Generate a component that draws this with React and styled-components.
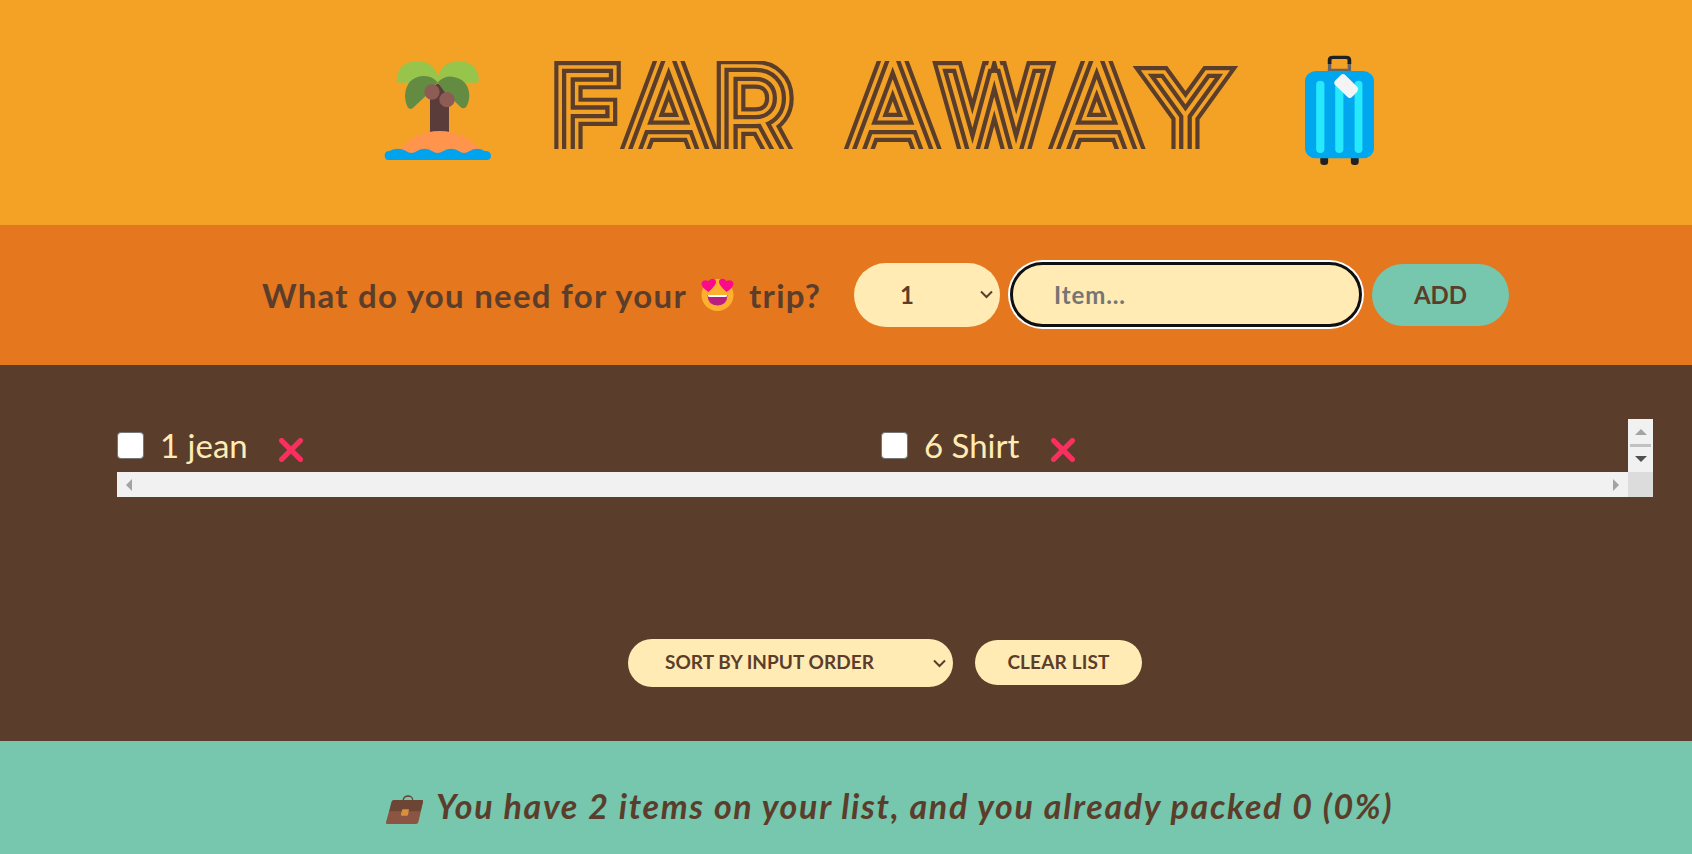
import React from "react";
import styled, { createGlobalStyle } from "styled-components";

const c = {
  sun: "#f4a226",
  orange: "#e5771f",
  brown: "#5a3e2b",
  bark: "#5a3e2b",
  cream: "#ffebb3",
  mint: "#76c7ad",
};

const GlobalStyle = createGlobalStyle`
  * { box-sizing: border-box; margin: 0; padding: 0; }
  body { font-family: Lato, "Open Sans", sans-serif; color: ${c.brown}; background: ${c.bark}; overflow: hidden; }
`;

const Page = styled.div`
  height: 854px;
  display: grid;
  grid-template-rows: 225px 140px 376px 113px;
`;

const Header = styled.header`
  background: ${c.sun};
  display: flex;
  align-items: flex-start;
  padding: 55px 0 0 384px;
`;
const PalmIcon = styled.svg`width: 107.3px; height: 101.3px; margin-top: 5px;`;
const Wordmark = styled.svg`width: 700px; height: 88px; margin: 6px 65px 0 48.7px;`;
const CaseIcon = styled.svg`width: 69px; height: 110px;`;

const Form = styled.form`
  background: ${c.orange};
  display: flex;
  align-items: center;
  padding: 0 0 1px 262px;
`;
const Prompt = styled.h3`
  width: 592px;
  display: flex;
  align-items: center;
  font-size: 33px;
  line-height: 40px;
  white-space: nowrap;
`;
const Words = styled.span`
  display: inline-block;
  white-space: nowrap;
  width: ${(p) => p.$w}px;
  letter-spacing: ${(p) => p.$track || 0}px;
`;
const FaceIcon = styled.svg`width: 33px; height: 33px; margin: 0 15px 0 15px;`;

const Picker = styled.div`
  display: flex;
  align-items: center;
  justify-content: space-between;
  width: ${(p) => p.$w}px;
  height: ${(p) => p.$h}px;
  border-radius: 100px;
  background: ${c.cream};
  padding: ${(p) => p.$pad};
  font-size: ${(p) => p.$size}px;
  font-weight: 700;
  letter-spacing: ${(p) => p.$track || 0}px;
  white-space: nowrap;
`;
const Chevron = styled.svg`width: 13px; height: 9px; flex: none;`;

const ItemInput = styled.input`
  width: 352px;
  height: 65px;
  margin-left: 10px;
  border: 3px solid #101010;
  border-radius: 100px;
  box-shadow: 0 0 0 2px #fff;
  outline: none;
  background: ${c.cream};
  padding: 0 41px 1px;
  font: 700 24px Lato, sans-serif;
  letter-spacing: 0.9px;
  &::placeholder { color: #757575; }
`;
const PillButton = styled.button`
  width: ${(p) => p.$w}px;
  height: ${(p) => p.$h}px;
  margin-left: ${(p) => p.$gap}px;
  margin-bottom: ${(p) => p.$lift || 0}px;
  padding-bottom: ${(p) => p.$drop ?? 2}px;
  border: 0;
  border-radius: 100px;
  background: ${(p) => p.$bg};
  color: ${c.brown};
  font: 700 ${(p) => p.$size}px Lato, sans-serif;
  letter-spacing: ${(p) => p.$track || 0}px;
  white-space: nowrap;
`;

const ListSection = styled.section`
  background: ${c.bark};
  padding: 54px 39px 0 117px;
`;
const ScrollBox = styled.div`
  display: grid;
  grid-template-columns: 1511px 25px;
  grid-template-rows: 53px 25px;
`;
const Items = styled.ul`
  display: grid;
  grid-template-columns: 764px 1fr;
  list-style: none;
`;
const Item = styled.li`
  display: flex;
  align-items: flex-start;
  padding-top: 13px;
  color: ${c.cream};
  font-size: 33px;
  line-height: 27px;
`;
const Check = styled.input`
  appearance: none;
  width: 27px;
  height: 27px;
  border: 1.5px solid #767676;
  border-radius: 4px;
  background: #fff;
  margin-right: 16px;
`;
const CrossIcon = styled.svg`width: 24px; height: 24px; margin: 6px 0 0 ${(p) => p.$gap}px;`;

const VBar = styled.div`
  background: #f1f1f1;
  display: flex;
  flex-direction: column;
  align-items: center;
  padding: 10px 0;
`;
const Thumb = styled.div`width: 21px; height: 3px; background: #c1c1c1; margin: 9px 0;`;
const HBar = styled.div`
  background: #f1f1f1;
  display: flex;
  align-items: center;
  justify-content: space-between;
  padding: 0 9px;
`;
const Corner = styled.div`background: #dcdcdc;`;
const Arrow = styled.svg`display: block; width: ${(p) => p.$w}px; height: ${(p) => p.$h}px; flex: none;`;

const Actions = styled.div`
  display: flex;
  align-items: center;
  padding-left: 511px;
  margin-top: 142px;
`;

const Footer = styled.footer`
  background: ${c.mint};
  display: flex;
  align-items: flex-start;
  padding: 45px 0 0 386px;
  font-size: 34px;
  font-weight: 700;
  font-style: italic;
  line-height: 40px;
`;
const BriefcaseIcon = styled.svg`width: 37px; height: 29px; margin: 9px 13px 0 0;`;

const Palm = () => (
  <PalmIcon viewBox="42 60 322 304">
    <path d="M80 121Q84 64 142 64Q195 66 204 112Q214 66 267 64Q324 67 327 121Q326 128 318 128H88Q80 128 80 121Z" fill="#97c54c" />
    <path d="M180 276V150L203 130L237 158V276Z" fill="#5a3c3a" />
    <path d="M203 127Q184 106 160 108Q108 112 105 168Q105 187 113 202Q122 212 131 202L171 164Z" fill="#638b42" />
    <path d="M203 127Q222 108 246 110Q295 116 298 165Q298 185 289 200Q280 209 271 200L222 154Z" fill="#638b42" />
    <circle cx="186" cy="156" r="23" fill="#8c5c55" />
    <circle cx="231" cy="179" r="23" fill="#8c5c55" />
    <path d="M86 332Q135 273 209 273Q282 273 334 332L300 345H120Z" fill="#ff944d" />
    <path d="M44 345Q45 333 58 333Q84 320 108 333Q124 345 141 333Q164 320 186 333Q202 345 220 333Q244 320 266 333Q282 345 299 333Q322 320 344 333Q363 332 363 347Q363 360 350 360H56Q43 360 44 345Z" fill="#00a3ee" />
  </PalmIcon>
);

const Suitcase = () => (
  <CaseIcon viewBox="1311 45 185 330" preserveAspectRatio="none">
    <path d="M1377 95V70M1430 95V70M1372 91H1434" stroke="#6b6560" strokeWidth="9" />
    <path d="M1377 72V60Q1377 52 1386 52H1421Q1430 52 1430 60V72" fill="none" stroke="#212121" strokeWidth="10" />
    <rect x="1352" y="340" width="21" height="35" rx="9" fill="#212121" />
    <rect x="1434" y="340" width="21" height="35" rx="9" fill="#212121" />
    <rect x="1311" y="93" width="185" height="262" rx="30" fill="#00a6ee" />
    <rect x="1341" y="122" width="22" height="217" rx="11" fill="#26eafc" />
    <rect x="1392" y="122" width="22" height="217" rx="11" fill="#26eafc" />
    <rect x="1444" y="122" width="21" height="217" rx="11" fill="#26eafc" />
    <path d="M1391 123L1407 105Q1413 99 1419 105L1452 142Q1456 148 1451 155L1437 171Q1431 178 1425 171L1391 134Q1387 128 1391 123Z" fill="#f4f4f4" />
  </CaseIcon>
);

const Title = () => (
  <Wordmark viewBox="540 61 700 88">
    <defs>
      <text id="wordmark" fontFamily="Inter" fontWeight="100" fontSize="104" y="150" x="555.5">
        F<tspan x="624" y="163" fontSize="140">A</tspan><tspan x="716" y="161" fontSize="121">R </tspan><tspan x="848" y="163" fontSize="140">A</tspan><tspan x="946" y="150">W</tspan><tspan x="1052" y="163" fontSize="140">A</tspan><tspan x="1155" y="147.5" fontSize="95">Y</tspan>
      </text>
    </defs>
    <use href="#wordmark" stroke={c.brown} strokeWidth="26" fill={c.brown} />
    <use href="#wordmark" stroke={c.sun} strokeWidth="17.6" fill={c.sun} />
    <use href="#wordmark" stroke={c.brown} strokeWidth="10.6" fill={c.brown} />
    <use href="#wordmark" stroke={c.sun} strokeWidth="2" fill={c.sun} />
  </Wordmark>
);

const Face = () => (
  <FaceIcon viewBox="0 0 33 33">
    <circle cx="16.5" cy="17" r="16" fill="#ffb02e" />
    <path d="M7.5 14Q0 9 0.5 5Q2 1 7.5 3Q11-1 14.5 2Q17 6 7.5 14Z" fill="#fb0a8c" />
    <path d="M25.5 14Q33 9 32.5 5Q31 1 25.5 3Q22-1 18.5 2Q16 6 25.5 14Z" fill="#fb0a8c" />
    <path d="M6.5 17H26.5Q26 27.5 16.5 27.5Q7 27.5 6.5 17Z" fill="#bb1d80" />
    <path d="M7 17H26V18Q26 19 24 19H9Q7 19 7 18Z" fill="#fff" />
  </FaceIcon>
);

const Briefcase = () => (
  <BriefcaseIcon viewBox="48 194 111 87">
    <path d="M99 211Q101 197 115 197Q129 198 128 211" fill="none" stroke="#6d4534" strokeWidth="4" />
    <path d="M65 214Q67 209 72 209H156Q160 210 159 214L145 276Q143 281 138 281H51Q47 280 48 276Z" fill="#8c5543" />
    <path d="M65 214Q67 209 72 209H156Q160 210 159 214L152 243H58Z" fill="#6d4534" />
    <path d="M97 237H117L114 254Q113 256 110 256H95Q92 255 93 252Z" fill="#d98f3d" />
  </BriefcaseIcon>
);

const Down = () => (
  <Chevron viewBox="0 0 13 9">
    <path d="M1 1.5L6.5 7L12 1.5" fill="none" stroke={c.brown} strokeWidth="2" />
  </Chevron>
);

const Cross = ({ gap }) => (
  <CrossIcon $gap={gap} viewBox="0 0 24 24">
    <path d="M2.6 2.6L21.4 21.4M21.4 2.6L2.6 21.4" stroke="#f92f60" strokeWidth="5.2" strokeLinecap="round" />
  </CrossIcon>
);

const Label = styled.span`padding-bottom: ${(p) => p.$drop ?? 2}px;`;

const items = [
  { label: "1 jean", w: 86, track: 0, gap: 33 },
  { label: "6 Shirt", w: 94, track: 0, gap: 33 },
];

export default function App() {
  return (
    <Page>
      <GlobalStyle />
      <Header>
        <Palm />
        <Title />
        <Suitcase />
      </Header>
      <Form>
        <Prompt>
          <Words $w={424} $track={1.25}>What do you need for your</Words>
          <Face />
          <Words $w={72} $track={1.3}>trip?</Words>
        </Prompt>
        <Picker $w={146} $h={64} $pad="0 7px 0 46px" $size={24}><Label $drop={1}>1</Label><Down /></Picker>
        <ItemInput placeholder="Item..." />
        <PillButton type="button" $w={137} $h={62} $gap={10} $drop={1} $bg={c.mint} $size={24}>ADD</PillButton>
      </Form>
      <ListSection>
        <ScrollBox>
          <Items>
            {items.map((i) => (
              <Item key={i.label}>
                <Check type="checkbox" />
                <Words $w={i.w} $track={i.track}>{i.label}</Words>
                <Cross gap={i.gap} />
              </Item>
            ))}
          </Items>
          <VBar>
            <Arrow $w={12} $h={6} viewBox="0 0 12 6"><path d="M0 6L6 0L12 6Z" fill="#a3a3a3" /></Arrow>
            <Thumb />
            <Arrow $w={12} $h={6} viewBox="0 0 12 6"><path d="M0 0H12L6 6Z" fill="#505050" /></Arrow>
          </VBar>
          <HBar>
            <Arrow $w={6} $h={12} viewBox="0 0 6 12"><path d="M6 0V12L0 6Z" fill="#a3a3a3" /></Arrow>
            <Arrow $w={6} $h={12} viewBox="0 0 6 12"><path d="M0 0V12L6 6Z" fill="#a3a3a3" /></Arrow>
          </HBar>
          <Corner />
        </ScrollBox>
        <Actions>
          <Picker $w={325} $h={48} $pad="0 7px 0 37px" $size={19} $track={0.05}><Label $drop={3}>SORT BY INPUT ORDER</Label><Down /></Picker>
          <PillButton type="button" $w={167} $h={45} $gap={22} $lift={1} $bg={c.cream} $size={19} $track={0.15}>CLEAR LIST</PillButton>
        </Actions>
      </ListSection>
      <Footer>
        <Briefcase />
        <Words $w={960} $track={1.67}>You have 2 items on your list, and you already packed 0 (0%)</Words>
      </Footer>
    </Page>
  );
}
